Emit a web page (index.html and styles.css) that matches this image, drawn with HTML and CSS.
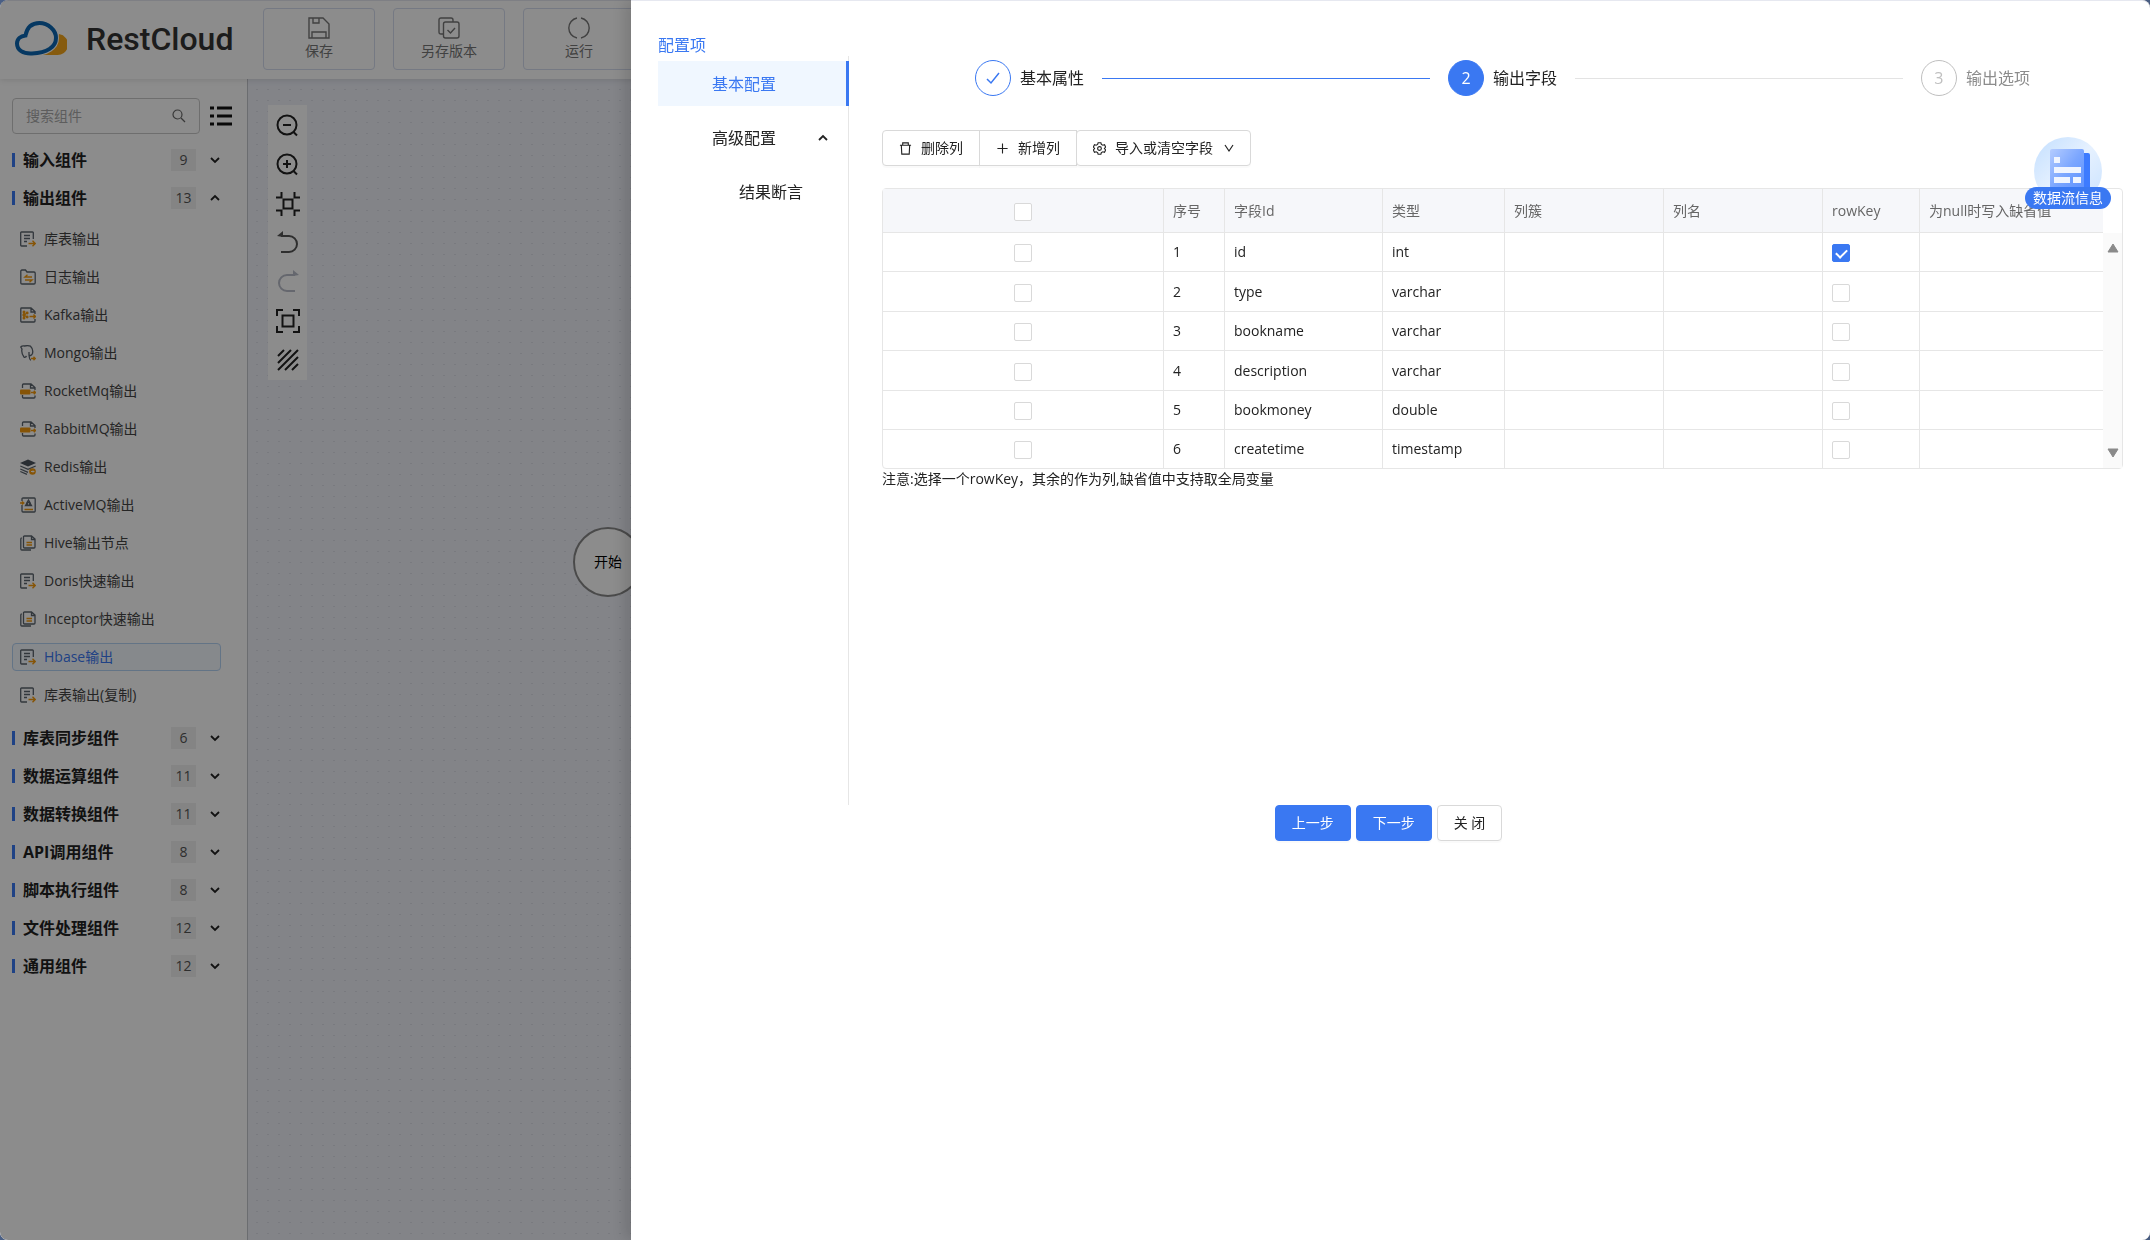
FILE: index.html
```html
<!DOCTYPE html>
<html lang="zh-CN">
<head>
<meta charset="utf-8">
<title>RestCloud</title>
<link rel="stylesheet" href="styles.css">
</head>
<body>
<svg class="sprite" aria-hidden="true">
  <symbol id="doc-out" viewBox="0 0 16 16"><path class="g" d="M13.300 8V1.800Q13.300 1 12.500 1H1.500Q.7 1 .7 1.800V14.200Q.7 15 1.500 15H7"/><path class="g" d="M4 4.500h6M4 7.500h6M4 10.500h3"/><path class="o" d="M8.500 12.500H15M12.500 9.800L15.200 12.500L12.500 15.200"/></symbol>
  <symbol id="folder" viewBox="0 0 16 16"><path class="g" d="M.8 2.300Q.8 1 2 1H5.500L7 3H14Q15.200 3 15.200 4.200V13.800Q15.200 15 14 15H2Q.8 15 .8 13.800Z"/><path class="o" d="M12 8H5L7.500 5.800M5 11H12L9.500 13.200"/></symbol>
  <symbol id="kafka" viewBox="0 0 16 16"><path class="g" d="M15 7V4.500L11 1H1.500Q.8 1 .8 1.800V14.200Q.8 15 1.500 15H14Q15 15 15 14V12M11 1V5H15"/><path class="o" d="M4 5V11M4 8L7 6M4 8L7 10M9.500 9.500H15.500M13.500 7.500L15.500 9.500L13.500 11.500"/><g class="of"><circle cx="4" cy="5" r="1.500"/><circle cx="4" cy="8" r="1.700"/><circle cx="4" cy="11" r="1.500"/><circle cx="7.200" cy="6" r="1.400"/><circle cx="7.200" cy="10" r="1.400"/></g></symbol>
  <symbol id="mongo" viewBox="0 0 16 16"><path class="g" d="M4 12Q1 8 2 4L.8 2Q2 .6 4.500 1Q8 .2 10.500 1.200Q13.500 4 12.500 8.500Q11 11.500 9 10V7M4 12Q5 13 6.500 11M9 10Q9.500 15 11 15.200"/><path class="o" d="M11 13.500H15M13.500 11.800L15.200 13.500L13.500 15.200"/></symbol>
  <symbol id="mq" viewBox="0 0 16 16"><path class="g" d="M2.500 5V2Q2.500 1 3.500 1H11L15 4.500V7M2.500 12V14Q2.500 15 3.500 15H14Q15 15 15 14V12.500M10.500 1V5H15"/><rect class="of" x="0" y="6.500" width="10.500" height="5" rx="1"/><path class="o" d="M11 9.500H15.500M13.800 7.800L15.500 9.500L13.800 11.200"/></symbol>
  <symbol id="redis" viewBox="0 0 16 16"><path class="gf" d="M0 4L8 .5L16 4L8 7.500Z"/><path class="g" d="M.3 7L8 10.300L15.700 7M.3 10L8 13.300M.3 12.500L7 15.300"/><circle class="of" cx="12.500" cy="12.500" r="3.300"/><path class="w" d="M11 12.500H14M13 11.500L14 12.500L13 13.500"/></symbol>
  <symbol id="activemq" viewBox="0 0 16 16"><path class="g" d="M2 4V1.800Q2 1 3 1H14.300Q15.200 1 15.200 2V14Q15.200 15 14.300 15H3Q2 15 2 14V8"/><path class="g" d="M8.500 3L10 5.500H7ZM7 6L5.500 8.500H8ZM10 6L11.500 8.500H9Z"/><path class="o" d="M4.500 12.500H13M0 6H3.500M2 4.500L3.800 6L2 7.500"/></symbol>
  <symbol id="copy" viewBox="0 0 16 16"><path class="g" d="M3.500 1.800Q3.500 1 4.500 1H11.500L15 4V12Q15 13 14 13H4.500Q3.500 13 3.500 12ZM11.500 1V4.500H15M1.800 3Q.8 3 .8 4V14Q.8 15 1.800 15H11"/><path class="o" d="M6.500 7.500H12M6.500 10H12"/></symbol>
  <symbol id="down" viewBox="0 0 10 10"><path d="M1 3L5 7L9 3" fill="none" stroke="currentColor" stroke-width="1.800"/></symbol>
  <symbol id="up" viewBox="0 0 10 10"><path d="M1 7L5 3L9 7" fill="none" stroke="currentColor" stroke-width="1.800"/></symbol>
</svg>

<div class="app">
  <header class="topbar">
    <a class="brand" href="#">
      <svg class="cloud" viewBox="0 0 52 36"><path d="M27 34H41A10.500 10.500 0 0 0 44 13Q41 27 27 34Z" fill="#f4a71d"/><path d="M17 32.500C8 33 2 29 2 22.500C2 18 5.500 15 10.500 14.500C12 6.500 17 2 24.500 2C33 2 41 9 41 17C41 26 32 32 17 32.500Z" fill="#fff" stroke="#fff" stroke-width="6"/><path d="M17 32.500C8 33 2 29 2 22.500C2 18 5.500 15 10.500 14.500C12 6.500 17 2 24.500 2C33 2 41 9 41 17C41 26 32 32 17 32.500Z" fill="#fff" stroke="#0b67b2" stroke-width="4"/></svg>
      <span>RestCloud</span>
    </a>
    <nav class="actions">
      <button class="action"><svg viewBox="0 0 22 22"><path d="M1 1H15L21 7V21H1ZM5 1V6H11V1M4 21V15H18V21"/></svg>保存</button>
      <button class="action"><svg viewBox="0 0 22 22"><path d="M5.500 17H3Q1 17 1 15V3Q1 1 3 1H13Q15 1 15 3V4.500M7.500 5H19Q21 5 21 7V19Q21 21 19 21H7.500Q5.500 21 5.500 19V7Q5.500 5 7.500 5ZM9.500 13L12.500 16L17 11"/></svg>另存版本</button>
      <button class="action"><svg viewBox="0 0 22 22"><path d="M9 1A10.200 10.200 0 0 0 9 21M13 1A10.200 10.200 0 0 1 13 21"/></svg>运行</button>
    </nav>
  </header>
  <div class="workspace">
    <aside class="sidebar">
      <div class="search-row">
        <label class="search"><input type="text" placeholder="搜索组件" aria-label="搜索组件"><svg viewBox="0 0 14 14"><circle cx="5.500" cy="5.500" r="4.500"/><path d="M9 9L13 13"/></svg></label>
        <button class="list-btn" aria-label="列表"><svg viewBox="0 0 22 20"><path d="M0 2H4M7 2H22M0 10H4M7 10H22M0 18H4M7 18H22"/></svg></button>
      </div>
      <div class="group"><b>输入组件</b><span class="count">9</span><svg><use href="#down"/></svg></div>
      <div class="group"><b>输出组件</b><span class="count">13</span><svg><use href="#up"/></svg></div>
      <ul class="items">
        <li><svg><use href="#doc-out"/></svg>库表输出</li>
        <li><svg><use href="#folder"/></svg>日志输出</li>
        <li><svg><use href="#kafka"/></svg>Kafka输出</li>
        <li><svg><use href="#mongo"/></svg>Mongo输出</li>
        <li><svg><use href="#mq"/></svg>RocketMq输出</li>
        <li><svg><use href="#mq"/></svg>RabbitMQ输出</li>
        <li><svg><use href="#redis"/></svg>Redis输出</li>
        <li><svg><use href="#activemq"/></svg>ActiveMQ输出</li>
        <li><svg><use href="#copy"/></svg>Hive输出节点</li>
        <li><svg><use href="#doc-out"/></svg>Doris快速输出</li>
        <li><svg><use href="#copy"/></svg>Inceptor快速输出</li>
        <li class="active"><svg><use href="#doc-out"/></svg>Hbase输出</li>
        <li><svg><use href="#doc-out"/></svg>库表输出(复制)</li>
      </ul>
      <div class="group"><b>库表同步组件</b><span class="count">6</span><svg><use href="#down"/></svg></div>
      <div class="group"><b>数据运算组件</b><span class="count">11</span><svg><use href="#down"/></svg></div>
      <div class="group"><b>数据转换组件</b><span class="count">11</span><svg><use href="#down"/></svg></div>
      <div class="group"><b>API调用组件</b><span class="count">8</span><svg><use href="#down"/></svg></div>
      <div class="group"><b>脚本执行组件</b><span class="count">8</span><svg><use href="#down"/></svg></div>
      <div class="group"><b>文件处理组件</b><span class="count">12</span><svg><use href="#down"/></svg></div>
      <div class="group"><b>通用组件</b><span class="count">12</span><svg><use href="#down"/></svg></div>
    </aside>
    <main class="canvas">
      <div class="tools">
        <button aria-label="缩小"><svg viewBox="0 0 24 24"><circle cx="11" cy="11" r="9.500"/><path d="M7 11H15M17.500 18L21 21.500"/></svg></button>
        <button aria-label="放大"><svg viewBox="0 0 24 24"><circle cx="11" cy="11" r="9.500"/><path d="M7 11H15M11 7V15M17.500 18L21 21.500"/></svg></button>
        <button aria-label="实际大小"><svg viewBox="0 0 24 24"><path d="M7.500 7.500H16.500V16.500H7.500ZM0 5.500H5.500V0M24 5.500H18.500V0M0 18.500H5.500V24M24 18.500H18.500V24"/></svg></button>
        <button aria-label="撤销"><svg class="undo" viewBox="0 0 24 24"><path d="M5 5H13A8 8 0 0 1 13 21H5"/><path class="tip" d="M1 5L7 0V6Z"/></svg></button>
        <button aria-label="重做"><svg class="redo" viewBox="0 0 24 24"><path d="M19 5H11A8 8 0 0 0 11 21H19"/><path class="tip" d="M23 5L17 0V6Z"/></svg></button>
        <button aria-label="适应画布"><svg viewBox="0 0 24 24"><path d="M6.500 6.500H17.500V17.500H6.500ZM1 7V1H7M17 1H23V7M23 17V23H17M7 23H1V17"/></svg></button>
        <button aria-label="框选"><svg viewBox="0 0 24 24"><path d="M2 8L8 2M2 15L15 2M2 22L22 2M9 22L22 9M16 22L22 16"/></svg></button>
      </div>
      <div class="node">开始</div>
    </main>
  </div>
</div>

<div class="mask"></div>

<section class="drawer">
  <div class="drawer-body">
    <nav class="side">
      <h2>配置项</h2>
      <ul class="menu">
        <li class="selected"><a href="#">基本配置</a></li>
        <li><a href="#">高级配置</a><svg><use href="#up"/></svg></li>
        <li class="sub"><a href="#">结果断言</a></li>
      </ul>
    </nav>
    <div class="panel">
      <ol class="steps">
        <li class="done"><span class="dot"><svg viewBox="0 0 16 16"><path d="M2 9L6 13L14 3"/></svg></span>基本属性</li>
        <li class="current"><span class="dot">2</span>输出字段</li>
        <li class="wait"><span class="dot">3</span>输出选项</li>
      </ol>
      <div class="btn-group">
        <button class="btn"><svg viewBox="0 0 14 14"><path d="M1 3.500H13M4 3V1H10V3M2.500 3.500L3 13H11L11.500 3.500"/></svg>删除列</button>
        <button class="btn"><svg viewBox="0 0 14 14"><path d="M7 1.500V12.500M1.500 7H12.500"/></svg>新增列</button>
        <button class="btn"><svg viewBox="0 0 14 14"><path d="M5.500 .8H8.500L9 2.600L10.600 3.500L12.400 3L13.600 5.500L12.300 7L13.600 8.500L12.400 11L10.600 10.500L9 11.400L8.500 13.200H5.500L5 11.400L3.400 10.500L1.600 11L.4 8.500L1.700 7L.4 5.500L1.600 3L3.400 3.500L5 2.600Z"/><circle cx="7" cy="7" r="2"/></svg>导入或清空字段<svg class="caret" viewBox="0 0 10 10"><path d="M1 2L5 8L9 2"/></svg></button>
      </div>
      <div class="grid">
        <table>
          <colgroup><col class="c-check"><col class="c-no"><col class="c-id"><col class="c-type"><col class="c-wide"><col class="c-wide"><col class="c-key"><col class="c-last"></colgroup>
          <thead>
            <tr><th class="center"><input type="checkbox" aria-label="全选"></th><th>序号</th><th>字段Id</th><th>类型</th><th>列簇</th><th>列名</th><th>rowKey</th><th>为null时写入缺省值</th></tr>
          </thead>
          <tbody>
            <tr><td class="center"><input type="checkbox" aria-label="选择 1"></td><td>1</td><td>id</td><td>int</td><td></td><td></td><td><input type="checkbox" checked aria-label="rowKey 1"></td><td></td></tr>
            <tr><td class="center"><input type="checkbox" aria-label="选择 2"></td><td>2</td><td>type</td><td>varchar</td><td></td><td></td><td><input type="checkbox" aria-label="rowKey 2"></td><td></td></tr>
            <tr><td class="center"><input type="checkbox" aria-label="选择 3"></td><td>3</td><td>bookname</td><td>varchar</td><td></td><td></td><td><input type="checkbox" aria-label="rowKey 3"></td><td></td></tr>
            <tr><td class="center"><input type="checkbox" aria-label="选择 4"></td><td>4</td><td>description</td><td>varchar</td><td></td><td></td><td><input type="checkbox" aria-label="rowKey 4"></td><td></td></tr>
            <tr><td class="center"><input type="checkbox" aria-label="选择 5"></td><td>5</td><td>bookmoney</td><td>double</td><td></td><td></td><td><input type="checkbox" aria-label="rowKey 5"></td><td></td></tr>
            <tr><td class="center"><input type="checkbox" aria-label="选择 6"></td><td>6</td><td>createtime</td><td>timestamp</td><td></td><td></td><td><input type="checkbox" aria-label="rowKey 6"></td><td></td></tr>
          </tbody>
        </table>
        <div class="scrollbar"><svg viewBox="0 0 12 10"><path d="M6 1L11 9H1Z"/></svg><svg viewBox="0 0 12 10"><path d="M6 9L11 1H1Z"/></svg></div>
      </div>
      <p class="note">注意:选择一个rowKey，其余的作为列,缺省值中支持取全局变量</p>
    </div>
  </div>
  <footer class="footer">
    <button class="btn primary">上一步</button>
    <button class="btn primary">下一步</button>
    <button class="btn">关 闭</button>
  </footer>
  <button class="flow">
    <svg viewBox="0 0 68 68"><defs><linearGradient id="halo" x1="0" y1="0" x2="1" y2="1"><stop offset="0" stop-color="#c3dfff"/><stop offset=".5" stop-color="#e6f1ff"/><stop offset="1" stop-color="#c9e2ff"/></linearGradient><linearGradient id="sheet" x1="0" y1="0" x2="1" y2="1"><stop offset="0" stop-color="#b4ccff"/><stop offset=".5" stop-color="#7ba6ff"/><stop offset="1" stop-color="#5b90ff"/></linearGradient></defs><circle cx="34" cy="34" r="34" fill="url(#halo)"/><rect x="22" y="16" width="34" height="40" rx="2" fill="#3d7bff"/><rect x="16" y="12" width="34" height="44" rx="2" fill="url(#sheet)"/><path d="M20 20h6v6h-6zM20 30h27v6h-27zM20 40h16v6h-16zM39 40h8v6h-8z" fill="#f0f5ff"/></svg>
    <span>数据流信息</span>
  </button>
</section>
</body>
</html>
```
FILE: styles.css
```css
* { box-sizing: border-box; }
html, body { height: 100%; }
body {
  margin: 0;
  background: #4a5f85;
  color: #222;
  font: 14px/20px "Open Sans", "Noto Sans CJK SC", sans-serif;
}
button { font: inherit; color: inherit; background: none; border: 0; padding: 0; }
ul, ol { list-style: none; margin: 0; padding: 0; }
a { color: inherit; text-decoration: none; }
svg { flex: none; }
.sprite { display: none; }
.g { fill: none; stroke: #5b646e; stroke-width: 1.3; }
.gf { fill: #4b545e; }
.o { fill: none; stroke: #f59a0c; stroke-width: 1.4; }
.of { fill: #f59a0c; }
.w { fill: none; stroke: #fff; stroke-width: 1; }

/* editor behind the drawer */
.app { display: flex; flex-direction: column; min-height: 100%; border-top: 1px solid #e6e8f0; border-radius: 8px; background: #fff; overflow: hidden; isolation: isolate; }
.topbar { display: flex; align-items: center; height: 78px; padding-bottom: 2px; background: #fff; box-shadow: 0 1px 6px rgba(0, 0, 0, .12); z-index: 1; }
.brand { display: flex; align-items: center; gap: 19px; width: 263px; padding-left: 15px; font: 500 32px/40px Roboto, sans-serif; color: #333; }
.cloud { width: 52px; height: 36px; }
.actions { display: flex; gap: 18px; }
.action { display: flex; flex-direction: column; align-items: center; justify-content: center; gap: 2px; width: 112px; height: 62px; border: 1px solid #d5dcee; border-radius: 4px; color: #777; }
.action svg { width: 22px; height: 22px; fill: none; stroke: #777; stroke-width: 1.4; }
.workspace { display: flex; flex: 1; }
.sidebar { width: 248px; padding: 19px 0 0 12px; background: #fff; border-right: 1px solid #c4c6cc; }
.search-row { display: flex; align-items: center; gap: 10px; margin-bottom: 7px; }
.search { display: flex; align-items: center; width: 188px; height: 36px; padding: 0 13px; border: 1px solid #c8c8c8; border-radius: 4px; }
.search input { flex: 1; min-width: 0; border: 0; padding: 0; font: inherit; background: none; }
.search input::placeholder { color: #aaa; }
.search svg { width: 14px; height: 14px; fill: none; stroke: #666; stroke-width: 1.2; }
.list-btn { height: 20px; }
.list-btn svg { width: 22px; height: 20px; stroke: #111; stroke-width: 3; }
.group { display: flex; align-items: center; height: 38px; }
.group::before { content: ""; width: 3px; height: 14px; background: #3a78f2; }
.group b { flex: 1; margin-left: 8px; font-size: 16px; }
.count { width: 25px; background: #f0f0f0; color: #555; text-align: center; line-height: 22px; }
.group svg { width: 10px; height: 10px; margin: 0 27px 0 14px; }
.items { padding: 3px 0 0; color: #444; }
.items li { display: flex; align-items: center; gap: 8px; width: 209px; height: 28px; margin: 5px 0 10px; padding-left: 7px; border: 1px solid transparent; border-radius: 4px; }
.items svg { width: 16px; height: 16px; }
.items .active { color: #3a78f2; border-color: #b5d3f5; background: #f5f9ff; }
.canvas { position: relative; flex: 1; padding: 26px 0 0 20px; background: #eef0f8 radial-gradient(circle at 9px 11px, #dcdfe8 1px, transparent 1px) 0 0 / 11px 11px; }
.tools { display: flex; flex-direction: column; width: 39px; padding: 1px 0; background: #fff; }
.tools button { display: flex; align-items: center; justify-content: center; height: 39px; }
.tools svg { width: 24px; height: 24px; fill: none; stroke: #222; stroke-width: 2; }
.tools .undo { stroke: #555; }
.tools .redo { stroke: #b8bcc8; }
.tools .tip { fill: #555; stroke: none; }
.tools .redo .tip { fill: #b8bcc8; }
.node { position: absolute; left: 325px; top: 448px; display: flex; align-items: center; justify-content: center; width: 70px; height: 70px; border: 2px solid #888; border-radius: 50%; background: #fff; color: #000; }
.mask { position: fixed; inset: 0; border-radius: 8px; background: rgba(0, 0, 0, .45); }

/* configuration drawer */
.drawer { position: fixed; top: 0; right: 0; bottom: 0; left: 631px; padding: 34px 27px 0; border-top: 1px solid #e6e8f0; border-radius: 0 8px 8px 0; background: #fff; box-shadow: -6px 0 16px rgba(0, 0, 0, .15); overflow: auto; }
.drawer-body { display: flex; min-height: 770px; }
.side { display: flex; flex-direction: column; width: 191px; }
.side h2 { margin: 0; font-size: 16px; font-weight: 400; line-height: 21px; color: #3a78f2; }
.menu { flex: 1; padding-top: 5px; border-right: 1px solid #e6e6e6; }
.menu li { display: flex; align-items: center; justify-content: space-between; height: 45px; margin-bottom: 9px; padding: 0 20px 0 54px; font-size: 16px; }
.menu .sub { padding-left: 81px; }
.menu .selected { margin-right: -1px; border-right: 3px solid #3a78f2; background: #f0f7ff; color: #3a78f2; }
.menu svg { width: 10px; height: 10px; }
.panel { flex: 1; min-width: 0; padding: 25px 0 0 33px; }
.steps { display: flex; width: 85%; margin: 0 auto 34px; font-size: 16px; }
.steps li { display: flex; align-items: center; flex: 1; height: 36px; }
.steps li:last-child { flex: none; }
.steps li:not(:last-child)::after { content: ""; flex: 1; height: 1px; margin: 0 18px; background: #e3e3e3; }
.steps .done::after { background: #3a78f2 !important; }
.dot { display: flex; align-items: center; justify-content: center; width: 36px; height: 36px; margin-right: 9px; border: 1px solid #3a78f2; border-radius: 50%; }
.dot svg { width: 16px; height: 16px; fill: none; stroke: #3a78f2; stroke-width: 1.5; }
.current .dot { background: #3a78f2; color: #fff; }
.wait { color: #8c8c8c; }
.wait .dot { border-color: #bfbfbf; color: #bfbfbf; }
.btn { display: flex; align-items: center; justify-content: center; height: 36px; padding: 0 16px; border: 1px solid #d9d9d9; border-radius: 4px; background: #fff; box-shadow: 0 2px 0 rgba(0, 0, 0, .02); }
.btn svg { width: 13px; height: 13px; margin-right: 9px; fill: none; stroke: currentColor; stroke-width: 1.2; }
.btn .caret { width: 10px; height: 10px; margin: 0 0 0 11px; }
.btn-group { display: flex; margin-bottom: 22px; }
.btn-group .btn + .btn { margin-left: -1px; }
.btn-group .btn:first-child { border-radius: 4px 0 0 4px; }
.btn-group .btn:nth-child(2) { border-radius: 0; }
.grid { display: flex; border: 1px solid #e6e6e6; border-radius: 4px; }
table { flex: 1; height: 279px; border-collapse: separate; border-spacing: 0; table-layout: fixed; }
.c-check { width: 281px; }
.c-no { width: 61px; }
.c-id { width: 158px; }
.c-type { width: 122px; }
.c-wide { width: 159px; }
.c-key { width: 97px; }
th, td { padding: 0 9px; border-right: 1px solid #e6e6e6; border-bottom: 1px solid #e6e6e6; text-align: left; font-weight: 400; }
th { height: 44px; background: #f6f7fa; color: #666; white-space: nowrap; }
th:last-child, td:last-child { border-right: 0; }
tbody tr:last-child td { border-bottom: 0; }
th.center, td.center { text-align: center; }
input[type="checkbox"] { appearance: none; display: inline-block; width: 18px; height: 18px; margin: 0; border: 1px solid #d9d9d9; border-radius: 2px; background: #fff; vertical-align: middle; }
input[type="checkbox"]:checked { border-color: #3a78f2; background: #3a78f2; }
input[type="checkbox"]:checked::after { content: ""; display: block; width: 5px; height: 9px; margin: 2px 0 0 5px; border: solid #fff; border-width: 0 2px 2px 0; transform: rotate(45deg); }
.scrollbar { display: flex; flex-direction: column; align-items: center; justify-content: space-between; width: 19px; margin-top: 44px; padding: 10px 0; background: #fafafa; }
.scrollbar svg { width: 12px; height: 10px; fill: #8a8a8a; stroke: #8a8a8a; stroke-linejoin: round; }
.note { margin: 0; }
.footer { display: flex; justify-content: center; gap: 5px; padding-right: 4px; }
.primary { border-color: #3a78f2; background: #3a78f2; color: #fff; }
.flow { position: absolute; top: 136px; right: 39px; display: flex; flex-direction: column; align-items: center; }
.flow svg { width: 68px; height: 68px; }
.flow span { margin-top: -18px; padding: 0 8px; border-radius: 11px; background: #3a78f2; color: #fff; line-height: 22px; }
```
